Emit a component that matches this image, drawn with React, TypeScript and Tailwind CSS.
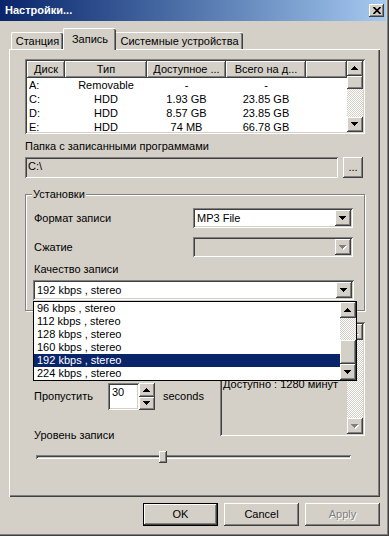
import React from "react";

const RAISED =
  "shadow-[inset_-1px_-1px_#404040,inset_1px_1px_#ffffff,inset_-2px_-2px_#808080,inset_2px_2px_#d4d0c8]";
const SUNKEN =
  "shadow-[inset_1px_1px_#808080,inset_-1px_-1px_#ffffff,inset_2px_2px_#404040,inset_-2px_-2px_#d4d0c8]";
const CHECKER =
  "bg-[image:repeating-conic-gradient(#ffffff_0%_25%,#d4d0c8_0%_50%)] bg-size-[2px_2px]";

function Arrow({ dir, disabled }: { dir: "up" | "down"; disabled?: boolean }) {
  const rects = [0, 1, 2, 3].map((i) => ({
    x: i,
    y: dir === "down" ? i : 3 - i,
    w: 7 - 2 * i,
  }));
  return (
    <svg width="8" height="5" viewBox="0 0 8 5" shapeRendering="crispEdges">
      {disabled &&
        rects.map((r, k) => (
          <rect key={"s" + k} x={r.x + 1} y={r.y + 1} width={r.w} height={1} fill="#ffffff" />
        ))}
      {rects.map((r, k) => (
        <rect key={k} x={r.x} y={r.y} width={r.w} height={1} fill={disabled ? "#808080" : "#000000"} />
      ))}
    </svg>
  );
}

function SBtn({ dir, disabled, className }: { dir: "up" | "down"; disabled?: boolean; className: string }) {
  return (
    <div className={`w-[16px] shrink-0 bg-[#d4d0c8] flex items-center justify-center ${RAISED} ${className}`}>
      <Arrow dir={dir} disabled={disabled} />
    </div>
  );
}

function Combo({ text, disabled, className }: { text: string; disabled?: boolean; className: string }) {
  return (
    <div
      className={`h-[20px] flex items-center pl-[4px] pr-[2px] ${SUNKEN} ${
        disabled ? "bg-[#d4d0c8]" : "bg-white"
      } ${className}`}
    >
      <span className="flex-1 whitespace-nowrap">{text}</span>
      <SBtn dir="down" disabled={disabled} className="h-[16px]" />
    </div>
  );
}

const drives = [
  ["A:", "Removable", "-", "-"],
  ["C:", "HDD", "1.93 GB", "23.85 GB"],
  ["D:", "HDD", "8.57 GB", "23.85 GB"],
  ["E:", "HDD", "74 MB", "66.78 GB"],
];

const qualities = [
  "96 kbps , stereo",
  "112 kbps , stereo",
  "128 kbps , stereo",
  "160 kbps , stereo",
  "192 kbps , stereo",
  "224 kbps , stereo",
];

function Button({ label, isDefault, disabled }: { label: string; isDefault?: boolean; disabled?: boolean }) {
  if (isDefault) {
    return (
      <div className="w-[75px] h-[23px] border border-black">
        <div className={`w-full h-full flex items-center justify-center ${RAISED}`}>{label}</div>
      </div>
    );
  }
  return (
    <div
      className={`w-[75px] h-[23px] flex items-center justify-center ${RAISED} ${
        disabled ? "text-[#808080] [text-shadow:1px_1px_#ffffff]" : ""
      }`}
    >
      {label}
    </div>
  );
}

export default function App() {
  return (
    <div className="w-[389px] h-[536px] bg-[#d4d0c8] flex flex-col text-[11px] leading-[13px] text-black font-['Liberation_Sans',Arial,sans-serif] shadow-[inset_-1px_-1px_#404040,inset_-2px_-2px_#808080] overflow-hidden">
      {/* Title bar */}
      <div className="h-[21px] w-[386px] shrink-0 bg-linear-to-r from-[#0a246a] to-[#a6caf0] flex items-center pl-[5px] pr-[2px]">
        <span className="font-bold text-white">Настройки...</span>
        <div className={`ml-auto w-[15px] h-[13px] bg-[#d4d0c8] flex items-center justify-center ${RAISED}`}>
          <svg width="8" height="7" viewBox="0 0 8 7">
            <path d="M0.5 0 L7.5 7 M7.5 0 L0.5 7" stroke="#000" strokeWidth="1.7" />
          </svg>
        </div>
      </div>

      {/* Tabs */}
      <div className="h-[28px] shrink-0 flex items-end pl-[11px]">
        <div className="w-[52px] h-[17px] flex items-center justify-center border-l border-t border-white rounded-tl-[2px] shadow-[inset_-1px_0_#404040,inset_-2px_0_#808080] rounded-tr-[2px]">
          Станция
        </div>
        <div className="relative z-10 -mb-[1px] w-[53px] h-[22px] bg-[#d4d0c8] flex items-center justify-center border-l border-t border-white rounded-t-[2px] shadow-[inset_-1px_0_#404040,inset_-2px_0_#808080] pb-[1px]">
          Запись
        </div>
        <div className="w-[127px] h-[17px] flex items-center justify-center border-t border-white rounded-tr-[2px] shadow-[inset_-1px_0_#404040,inset_-2px_0_#808080]">
          Системные устройства
        </div>
      </div>

      {/* Tab panel */}
      <div className="ml-[9px] w-[371px] h-[448px] shrink-0 relative flex flex-col pl-[16px] shadow-[inset_1px_1px_#ffffff,inset_-1px_-1px_#404040,inset_-2px_-2px_#808080]">
        {/* Drive list */}
        <div className={`mt-[10px] w-[340px] h-[75px] bg-white p-[2px] flex overflow-hidden ${SUNKEN}`}>
          <div className="flex-1 flex flex-col overflow-hidden">
            <div className="h-[17px] flex shrink-0">
              {[
                ["Диск", "w-[38px]"],
                ["Тип", "w-[82px]"],
                ["Доступное ...", "w-[79px]"],
                ["Всего на д...", "w-[80px]"],
                ["", "flex-1"],
              ].map(([t, w], i) => (
                <div key={i} className={`${w} h-full bg-[#d4d0c8] flex items-center justify-center whitespace-nowrap ${RAISED}`}>
                  {t}
                </div>
              ))}
            </div>
            {drives.map((d, i) => (
              <div key={i} className="h-[14px] shrink-0 flex items-center">
                <div className="w-[38px] pl-[2px]">{d[0]}</div>
                <div className="w-[82px] text-center">{d[1]}</div>
                <div className="w-[79px] text-center">{d[2]}</div>
                <div className="w-[80px] text-center">{d[3]}</div>
              </div>
            ))}
          </div>
          <div className="w-[16px] flex flex-col">
            <SBtn dir="up" className="h-[15px]" />
            <div className={`h-[13px] bg-[#d4d0c8] ${RAISED}`} />
            <div className={`flex-1 ${CHECKER}`} />
            <SBtn dir="down" className="h-[15px]" />
          </div>
        </div>

        <div className="mt-[6px] h-[13px]">Папка с записанными программами</div>

        <div className="mt-[4px] h-[21px] flex gap-[5px]">
          <div className={`w-[313px] h-full bg-[#d4d0c8] pl-[3px] pt-[3px] ${SUNKEN}`}>C:\</div>
          <div className={`w-[20px] h-full flex items-end justify-center pb-[4px] ${RAISED}`}>...</div>
        </div>

        {/* Settings group */}
        <div className="mt-[16px] w-[340px] h-[117px] shrink-0 relative border border-[#808080] shadow-[inset_1px_1px_#ffffff,1px_1px_#ffffff] flex flex-col pl-[8px]">
          <div className="absolute left-[6px] -top-[7px] px-[1px] bg-[#d4d0c8]">Установки</div>
          <div className="mt-[13px] h-[20px] flex items-center">
            <div className="w-[159px]">Формат записи</div>
            <Combo text="MP3 File" className="w-[160px]" />
          </div>
          <div className="mt-[9px] h-[20px] flex items-center">
            <div className="w-[159px]">Сжатие</div>
            <Combo text="" disabled className="w-[160px]" />
          </div>
          <div className="mt-[6px] h-[13px]">Качество записи</div>
          <Combo text="192 kbps , stereo" className="mt-[4px] -ml-[1px] w-[321px]" />
        </div>

        {/* Lower section */}
        <div className="mt-[11px] h-[114px] flex shrink-0">
          <div className="w-[195px] pl-[9px] flex flex-col">
            <div className="mt-[61px] h-[27px] flex items-center">
              <div className="w-[74px]">Пропустить</div>
              <div className={`w-[31px] h-[27px] bg-white pl-[4px] pt-[3px] ${SUNKEN}`}>30</div>
              <div className="w-[16px] h-[27px] flex flex-col">
                <SBtn dir="up" className="h-[14px]" />
                <SBtn dir="down" className="h-[13px]" />
              </div>
              <div className="ml-[8px]">seconds</div>
            </div>
            <div className="mt-[19px] h-[13px] whitespace-nowrap">Уровень записи</div>
          </div>
          <div className={`w-[145px] h-[114px] bg-[#d4d0c8] p-[2px] flex ${SUNKEN}`}>
            <div className="flex-1 pl-[1px] pt-[54px] whitespace-nowrap overflow-hidden">Доступно : 1280 минут</div>
            <div className="w-[16px] flex flex-col">
              <SBtn dir="up" disabled className="h-[16px]" />
              <div className={`flex-1 ${CHECKER}`} />
              <SBtn dir="down" disabled className="h-[16px]" />
            </div>
          </div>
        </div>

        {/* Slider */}
        <div className="mt-[15px] ml-[11px] w-[315px] h-[12px] relative flex items-center">
          <div className={`w-full h-[4px] ${SUNKEN}`} />
          <div className={`absolute left-[123px] top-0 w-[8px] h-[12px] bg-[#d4d0c8] ${RAISED}`} />
        </div>

        {/* Open dropdown list */}
        <div className="absolute left-[24px] top-[252px] w-[324px] h-[80px] bg-white border border-black flex z-20">
          <div className="flex-1 flex flex-col">
            {qualities.map((q, i) => (
              <div
                key={i}
                className={`h-[13px] pl-[3px] flex items-center whitespace-nowrap ${
                  i === 4 ? "bg-[#0a246a] text-white" : ""
                }`}
              >
                {q}
              </div>
            ))}
          </div>
          <div className="w-[16px] flex flex-col">
            <SBtn dir="up" className="h-[16px]" />
            <div className={`h-[22px] ${CHECKER}`} />
            <div className={`h-[24px] bg-[#d4d0c8] ${RAISED}`} />
            <SBtn dir="down" className="h-[16px]" />
          </div>
        </div>
      </div>

      {/* Buttons */}
      <div className="mt-[6px] flex justify-end gap-[6px] pr-[9px]">
        <Button label="OK" isDefault />
        <Button label="Cancel" />
        <Button label="Apply" disabled />
      </div>
    </div>
  );
}
